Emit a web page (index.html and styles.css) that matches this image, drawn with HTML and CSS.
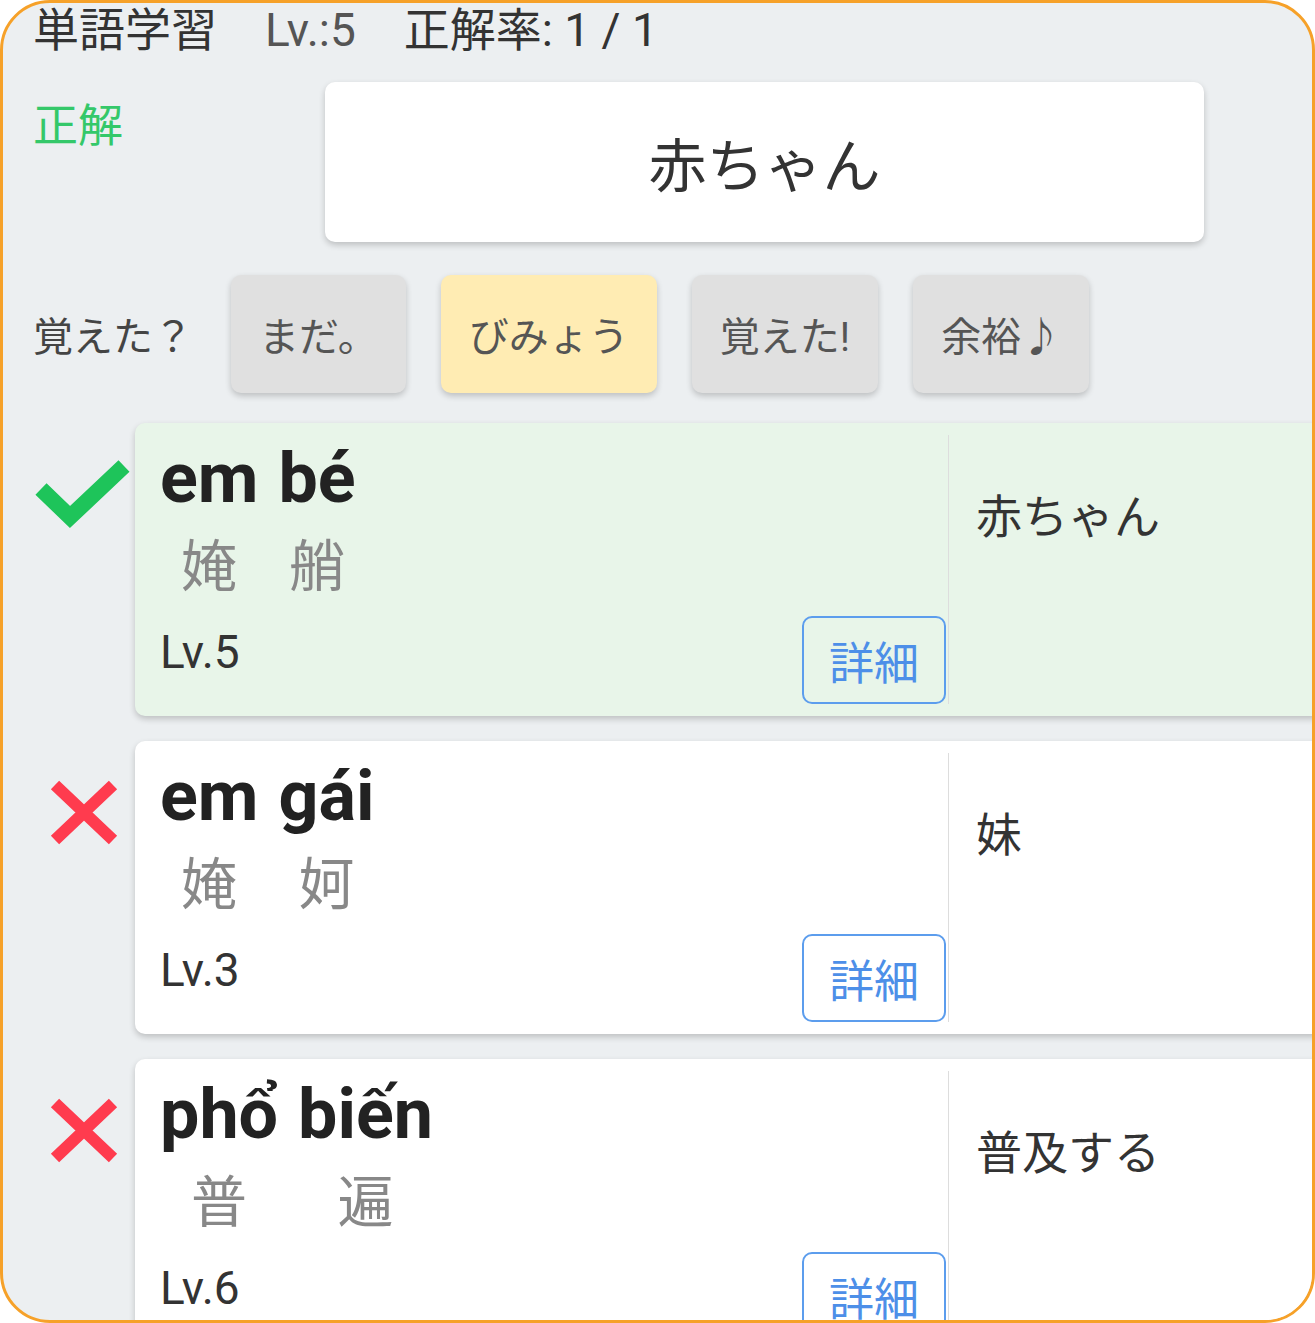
FILE: index.html
```html
<!DOCTYPE html>
<html lang="ja">

<head>
    <meta charset="UTF-8">
    <meta name="viewport" content="width=device-width, initial-scale=1.0">
    <title>単語学習</title>
    <link rel="stylesheet" href="styles.css">
</head>

<body>
    <div class="frame">
        <header class="status">
            <span class="title">単語学習</span>
            <span class="level">Lv.:5</span>
            <span class="rate">正解率: 1 / 1</span>
        </header>

        <section class="quiz">
            <div class="result">正解</div>
            <div class="prompt">赤ちゃん</div>
        </section>

        <section class="grade">
            <span class="grade-label">覚えた？</span>
            <button class="grade-btn">まだ。</button>
            <button class="grade-btn selected">びみょう</button>
            <button class="grade-btn">覚えた!</button>
            <button class="grade-btn">余裕♪</button>
        </section>

        <ul class="words">
            <li class="word-row">
                <div class="mark">
                    <svg width="102" height="102" viewBox="0 0 102 102">
                        <polyline points="8,44 37,72 91,21" fill="none" stroke="#1ec45a" stroke-width="16" />
                    </svg>
                </div>
                <div class="word-card correct">
                    <div class="word-main">
                        <div class="word">
                            <div class="syl"><span class="vi">em</span><span class="nom">㛪</span></div>
                            <div class="syl"><span class="vi">bé</span><span class="nom">艄</span></div>
                        </div>
                        <div class="word-foot">
                            <span class="lv">Lv.5</span>
                            <button class="detail">詳細</button>
                        </div>
                    </div>
                    <div class="meaning">赤ちゃん</div>
                </div>
            </li>
            <li class="word-row">
                <div class="mark">
                    <svg width="102" height="102" viewBox="0 0 102 102">
                        <path d="M22 22 L80 77 M80 22 L22 77" fill="none" stroke="#ff3b4e" stroke-width="12" />
                    </svg>
                </div>
                <div class="word-card">
                    <div class="word-main">
                        <div class="word">
                            <div class="syl"><span class="vi">em</span><span class="nom">㛪</span></div>
                            <div class="syl"><span class="vi">gái</span><span class="nom">妸</span></div>
                        </div>
                        <div class="word-foot">
                            <span class="lv">Lv.3</span>
                            <button class="detail">詳細</button>
                        </div>
                    </div>
                    <div class="meaning">妹</div>
                </div>
            </li>
            <li class="word-row">
                <div class="mark">
                    <svg width="102" height="102" viewBox="0 0 102 102">
                        <path d="M22 22 L80 77 M80 22 L22 77" fill="none" stroke="#ff3b4e" stroke-width="12" />
                    </svg>
                </div>
                <div class="word-card">
                    <div class="word-main">
                        <div class="word">
                            <div class="syl"><span class="vi">phổ</span><span class="nom">普</span></div>
                            <div class="syl"><span class="vi">biến</span><span class="nom">遍</span></div>
                        </div>
                        <div class="word-foot">
                            <span class="lv">Lv.6</span>
                            <button class="detail">詳細</button>
                        </div>
                    </div>
                    <div class="meaning">普及する</div>
                </div>
            </li>
        </ul>
    </div>
</body>

</html>
```

FILE: styles.css
```css
* {
    box-sizing: border-box;
}

body {
    margin: 0;
    background: #fff;
}

.frame {
    width: 1315px;
    height: 1323px;
    border: 3px solid #f6a129;
    border-radius: 50px;
    background: #eceff1;
    overflow: hidden;
    padding-left: 30px;
    font-family: Roboto, "Noto Sans CJK JP", sans-serif;
    color: #333;
}

.status {
    display: flex;
    gap: 48px;
    font-size: 46px;
    line-height: 54px;
}

.level {
    color: #555;
}

.quiz {
    display: flex;
    margin-top: 25px;
}

.result {
    width: 292px;
    padding-top: 22px;
    font-size: 45px;
    line-height: 1;
    color: #34c86a;
}

.prompt {
    width: 879px;
    height: 160px;
    display: flex;
    justify-content: center;
    align-items: center;
    background: #fff;
    border-radius: 10px;
    box-shadow: 0 3px 6px rgba(0, 0, 0, 0.2);
    font-size: 58px;
}

.grade {
    display: flex;
    align-items: center;
    gap: 35px;
    margin-top: 33px;
}

.grade-label {
    margin-right: 3px;
    font-size: 40px;
    color: #444;
}

.grade-btn {
    height: 118px;
    padding: 0 28px;
    border: none;
    border-radius: 10px;
    background: #e0e0e0;
    box-shadow: 0 3px 6px rgba(0, 0, 0, 0.2);
    font-family: inherit;
    font-size: 40px;
    color: #555;
}

.grade-btn.selected {
    background: #ffecb3;
}

.words {
    list-style: none;
    margin: 30px 0 0;
    padding: 0;
    display: flex;
    flex-direction: column;
    gap: 25px;
}

.word-row {
    display: flex;
}

.mark {
    width: 102px;
    flex-shrink: 0;
    padding-top: 22px;
}

.mark svg {
    display: block;
}

.word-card {
    flex: 1;
    display: flex;
    height: 293px;
    margin-right: -20px;
    padding: 12px 0;
    background: #fff;
    border-radius: 10px;
    box-shadow: 0 3px 6px rgba(0, 0, 0, 0.2);
}

.word-card.correct {
    background: #e8f5e9;
}

.word-main {
    width: 814px;
    flex-shrink: 0;
    display: flex;
    flex-direction: column;
    padding: 8px 2px 0 25px;
    border-right: 1px solid #ddd;
}

.word {
    display: flex;
    gap: 20px;
}

.syl {
    display: flex;
    flex-direction: column;
    align-items: center;
}

.vi {
    font-size: 70px;
    line-height: 70px;
    font-weight: 700;
    color: #222;
}

.nom {
    margin-top: 26px;
    font-size: 56px;
    line-height: 56px;
    color: #888;
}

.word-foot {
    margin-top: auto;
    display: flex;
    justify-content: space-between;
    align-items: center;
}

.lv {
    margin-bottom: 16px;
    font-size: 46px;
    line-height: 46px;
}

.detail {
    height: 88px;
    padding: 0 25px;
    border: 2px solid #5c9ded;
    border-radius: 10px;
    background: transparent;
    font-family: inherit;
    font-size: 45px;
    color: #4d8fe8;
}

.meaning {
    padding: 59px 0 0 27px;
    font-size: 46px;
    line-height: 1;
}
```
